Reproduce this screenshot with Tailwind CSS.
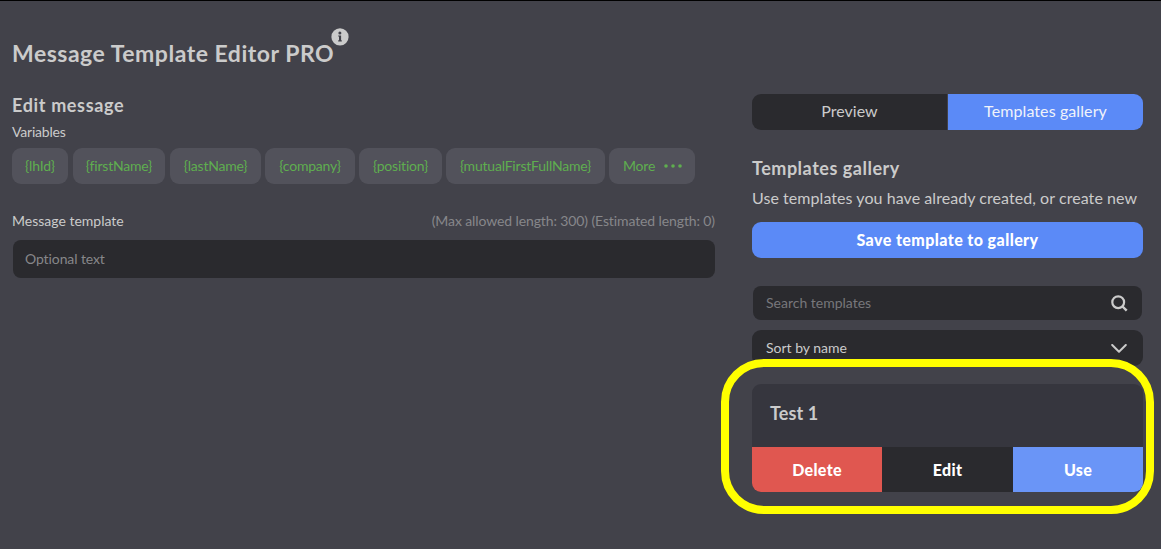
<!DOCTYPE html>
<html lang="en">
<head>
<meta charset="utf-8">
<title>Message Template Editor PRO</title>
<script src="https://cdn.jsdelivr.net/npm/@tailwindcss/browser@4"></script>
</head>
<body class="h-[549px] w-[1161px] overflow-hidden border-t border-black bg-[#42424a] font-['Lato',sans-serif] text-[#cbcbcb]">
<div class="relative flex h-full">
  <main class="w-[703px] ml-3 flex flex-col whitespace-nowrap">
    <div class="mt-[27px] flex h-[46px]">
      <h1 class="mt-[10px] text-[23px] leading-[30px] font-bold tracking-[0.51px]">Message Template Editor PRO</h1>
      <svg class="-ml-[3px] size-[18px]" viewBox="0 0 18 18"><circle cx="9" cy="8.9" r="8.6" fill="#cbcbcb"/><circle cx="8.9" cy="5" r="1.5" fill="#42424a"/><path d="M7.2 7.4h2.9v4.9h.7v1.2H7.2v-1.2h.8V8.6h-.8z" fill="#42424a"/></svg>
    </div>
    <h2 class="mt-[19px] text-[18px] leading-6 font-bold tracking-[0.65px]">Edit message</h2>
    <div class="mt-[5px] text-sm leading-5 tracking-[-0.2px]">Variables</div>
    <div class="mt-[6px] flex h-9 text-sm leading-9 text-[#5fae4f] text-center tracking-[-0.2px]">
      <div class="w-14 rounded-[9px] bg-[#52525b]">{lhId}</div>
      <div class="ml-[5px] w-[92px] rounded-[9px] bg-[#52525b]">{firstName}</div>
      <div class="ml-[5px] w-[91px] rounded-[9px] bg-[#52525b]">{lastName}</div>
      <div class="ml-1 w-[90px] rounded-[9px] bg-[#52525b]">{company}</div>
      <div class="ml-1 w-[83px] rounded-[9px] bg-[#52525b]">{position}</div>
      <div class="ml-1 w-[159px] rounded-[9px] bg-[#52525b]">{mutualFirstFullName}</div>
      <div class="ml-1 flex w-[86px] items-center rounded-[9px] bg-[#52525b] pl-[14px]">More
        <svg class="ml-[9px] h-1 w-[18px]" viewBox="0 0 18 4" fill="#5fae4f"><circle cx="2" cy="2" r="1.8"/><circle cx="9" cy="2" r="1.8"/><circle cx="16" cy="2" r="1.8"/></svg>
      </div>
    </div>
    <div class="mt-[27px] flex h-5 justify-between text-sm leading-5"><span>Message template</span><span class="text-[#87878a] tracking-[-0.11px]">(Max allowed length: 300) (Estimated length: 0)</span></div>
    <div class="mt-[9px] ml-px h-[38px] rounded-lg bg-[#2a2a2e] pl-3 text-sm leading-[38px] tracking-[-0.1px] text-[#87878a]">Optional text</div>
  </main>
  <aside class="ml-[37px] mt-[93px] w-[391px] whitespace-nowrap">
    <div class="flex h-9 gap-px overflow-hidden rounded-[9px] text-center text-base leading-[34px]">
      <div class="w-[195px] bg-[#2a2a2e]">Preview</div>
      <div class="w-[195px] bg-[#5b8af7] tracking-[0.1px] text-[#f0f3fa]">Templates gallery</div>
    </div>
    <h2 class="mt-[26px] text-[18px] leading-6 font-bold tracking-[0.52px]">Templates gallery</h2>
    <p class="mt-[6px] text-base leading-6 tracking-[0.06px]">Use templates you have already created, or create new</p>
    <div class="mt-3 h-9 rounded-[9px] bg-[#5b8af7] text-center text-base leading-9 font-black tracking-[0.42px] text-white">Save template to gallery</div>
    <div class="mx-px mt-7 flex h-[34px] items-center justify-between rounded-lg bg-[#2a2a2e] pr-[14px] pl-[13px] text-sm text-[#77777b]"><span>Search templates</span>
      <svg class="size-[17px]" viewBox="0 0 17 17" fill="none" stroke="#cbcbcb" stroke-width="2.2"><circle cx="7.2" cy="7.2" r="5.9"/><path d="m11.5 11.5 4.2 4.2" stroke-width="2.4"/></svg>
    </div>
    <div class="mt-[10px] flex h-9 items-center justify-between rounded-[9px] bg-[#2a2a2e] px-[14px] pr-4 text-sm"><span>Sort by name</span>
      <svg class="h-[9px] w-4" viewBox="0 0 16 9" fill="none" stroke="#cbcbcb" stroke-width="2" stroke-linecap="round" stroke-linejoin="round"><path d="m1.2 1 6.8 6.8L14.8 1"/></svg>
    </div>
    <div class="mt-[18px] h-[108px] overflow-hidden rounded-[9px] bg-[#36363e]">
      <div class="h-[63px] pl-[18px] text-[18px] leading-[58px] font-bold tracking-[0.1px]">Test 1</div>
      <div class="flex h-[45px] text-center text-base leading-[45px] font-black tracking-[0.3px] text-white">
        <div class="w-[130px] bg-[#e05750]">Delete</div><div class="w-[131px] bg-[#2a2a2e]">Edit</div><div class="w-[130px] bg-[#6a95f7]">Use</div>
      </div>
    </div>
  </aside>
  <div class="absolute top-[358px] left-[721px] h-[155px] w-[433px] rounded-[43px] border-8 border-[#ffff00]"></div>
</div>
</body>
</html>
